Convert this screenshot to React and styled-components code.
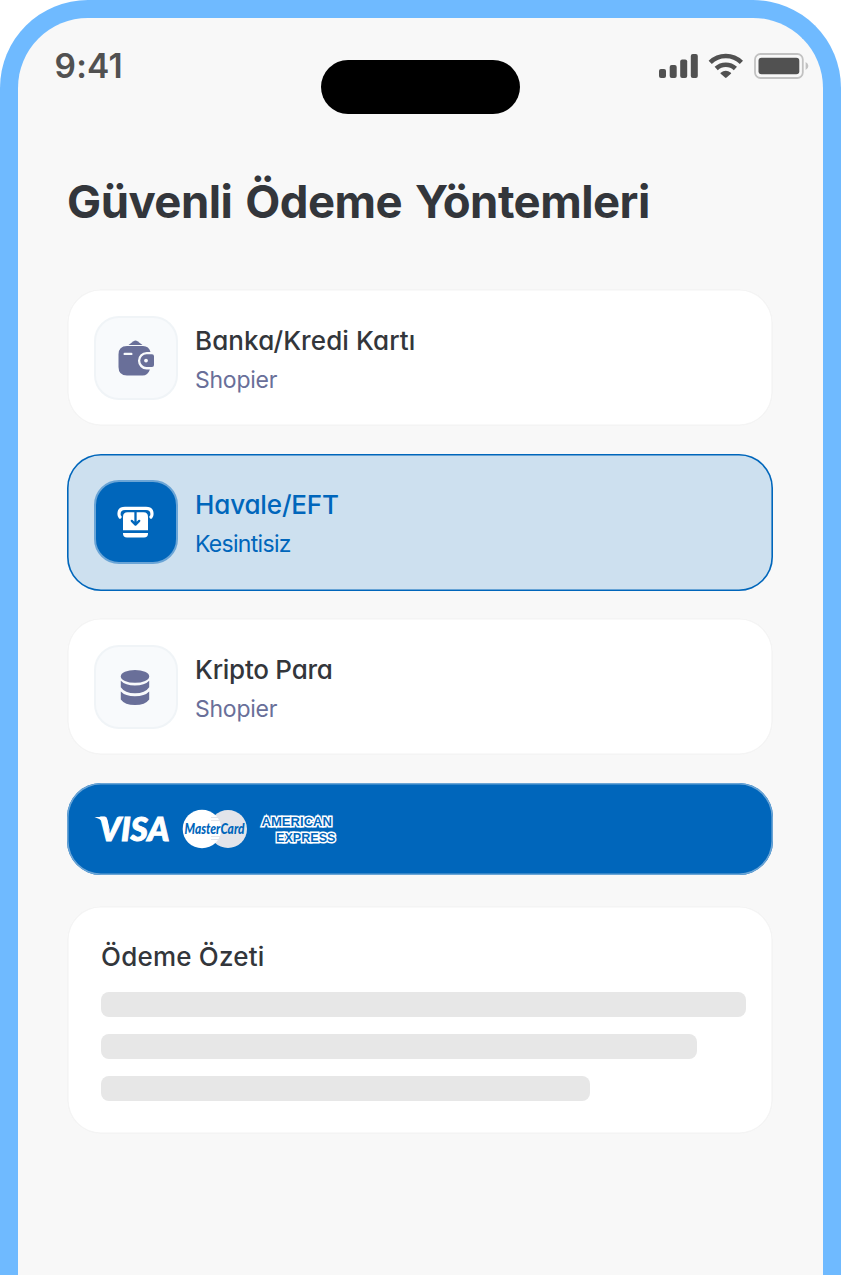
import React from 'react';
import styled, { createGlobalStyle } from 'styled-components';

const GlobalStyle = createGlobalStyle`
  * {
    box-sizing: border-box;
  }

  body {
    margin: 0;
    background: #ffffff;
    overflow: hidden;
    font-family: Inter, 'Liberation Sans', sans-serif;
    font-feature-settings: 'cv11', 'ss03';
  }
`;

const Phone = styled.main`
  width: 841px;
  height: 1275px;
  border: 18px solid #6fbaff;
  border-bottom: 0;
  border-radius: 88px 88px 0 0;
  background-color: #f8f8f8;
`;

const StatusBar = styled.header`
  display: grid;
  grid-template-columns: 1fr 199px 1fr;
  align-items: start;
  height: 96px;
`;

const Time = styled.time`
  padding: 28px 0 0 36.5px;
  font-size: 33.5px;
  line-height: 40px;
  font-weight: 600;
  letter-spacing: 0.2px;
  color: #515151;
`;

const Island = styled.div`
  height: 54px;
  margin-top: 42px;
  border-radius: 27px;
  background-color: #000000;
`;

const StatusIcons = styled.div`
  display: flex;
  justify-content: flex-end;
  padding: 34px 13px 0 0;
`;

const Content = styled.section`
  display: flex;
  flex-direction: column;
  padding: 0 50px 0 49px;
`;

const Title = styled.h1`
  margin: 58px 0 0;
  height: 60px;
  font-size: 45.5px;
  line-height: 60px;
  font-weight: 700;
  letter-spacing: -0.52px;
  word-spacing: 2.6px;
  white-space: nowrap;
  color: #33363b;
`;

const Methods = styled.div`
  display: flex;
  flex-direction: column;
  gap: 27.5px;
  margin-top: 57px;
`;

const Method = styled.article`
  display: flex;
  align-items: center;
  gap: 17px;
  height: 137px;
  padding: 0 27px;
  border-radius: 34px;
  background-color: ${({ $active }) => ($active ? '#cde0ef' : '#ffffff')};
  box-shadow: inset 0 0 0 1.6px ${({ $active }) => ($active ? '#0066bb' : '#f4f4f4')};
`;

const IconTile = styled.div`
  display: flex;
  align-items: center;
  justify-content: center;
  flex: none;
  width: 84px;
  height: 84px;
  border: 2px solid ${({ $active }) => ($active ? '#6ba5d6' : '#f0f4f7')};
  border-radius: 25px;
  background-color: ${({ $active }) => ($active ? '#0066bb' : '#f8fafc')};
  color: ${({ $active }) => ($active ? '#ffffff' : '#696f99')};
`;

const MethodText = styled.div`
  display: flex;
  flex-direction: column;
  gap: 5px;
  padding-top: 5px;
  white-space: nowrap;
`;

const MethodName = styled.h2`
  margin: 0;
  font-size: 26px;
  line-height: 34px;
  font-weight: 500;
  letter-spacing: ${({ $spacing }) => $spacing}px;
  color: ${({ $active }) => ($active ? '#0066bb' : '#33363b')};
`;

const Provider = styled.p`
  margin: 0;
  font-size: 23px;
  line-height: 34px;
  letter-spacing: ${({ $spacing }) => $spacing}px;
  color: ${({ $active }) => ($active ? '#0066bb' : '#696f99')};
`;

const CardBrands = styled.div`
  display: flex;
  align-items: center;
  height: 92px;
  margin-top: 28px;
  padding-left: 26px;
  border-radius: 34px;
  background-color: #0066bb;
  box-shadow: inset 0 0 0 1.6px #6ba5d6;
`;

const Summary = styled.section`
  display: flex;
  flex-direction: column;
  gap: 17px;
  height: 228px;
  margin-top: 31px;
  padding: 33px 26px 0 34px;
  border-radius: 34px;
  background-color: #ffffff;
  box-shadow: inset 0 0 0 1.6px #f4f4f4;
`;

const SummaryTitle = styled.h2`
  margin: 0;
  font-size: 26px;
  line-height: 36px;
  font-weight: 500;
  letter-spacing: 0.2px;
  color: #33363b;
`;

const Line = styled.div`
  flex: none;
  width: ${({ $width }) => $width}px;
  height: 25px;
  border-radius: 8px;
  background-color: #e7e7e7;
`;

const SignalIcons = () => (
  <svg width="152" height="28" viewBox="658 52 152 28" fill="#515151">
    <rect x="659" y="69" width="7" height="9" rx="2" />
    <rect x="669.7" y="65" width="7" height="13" rx="2" />
    <rect x="680.2" y="59.5" width="7" height="18.5" rx="2" />
    <rect x="690.8" y="54" width="7" height="24" rx="2" />
    <g fill="none" stroke="#515151" strokeWidth="4.6">
      <path d="M710.2 62.4a22.4 22.4 0 0 1 31.2 0" />
      <path d="M716.2 68.5a14 14 0 0 1 19.2 0" />
    </g>
    <path d="M720.7 72.7q5.1-4 10.2 0 .6.5 0 1.1l-4.3 3.8q-.8.7-1.6 0l-4.3-3.8q-.6-.6 0-1.1Z" />
    <rect x="755" y="54" width="47.8" height="24" rx="5.5" fill="none" stroke="#c2c2c2" strokeWidth="1.8" />
    <rect x="758.5" y="57.7" width="40.8" height="16.6" rx="3" />
    <path d="M805.6 62q2.800 1.400 2.800 4t-2.800 4Z" fill="#c2c2c2" />
  </svg>
);

const WalletIcon = () => (
  <svg width="38" height="38" viewBox="0 0 38 38" fill="currentColor">
    <path d="M11.5 6 16.500 2.200q2-1.400 4 0L25.500 6Z" />
    <path d="M10 7h16q6 0 7.5 6h-3.8a8.2 8.2 0 0 0 0 17.5h3.2q-2 6-7.4 6H10q-8.500 0-8.500-8.500V15.500Q1.500 7 10 7Z" />
    <path d="M29.500 15.300h5.500q2 0 2 2v8.600q0 2-2 2h-5.500a6.300 6.300 0 0 1 0-12.600Z" />
    <rect x="6.500" y="13.700" width="9" height="2.400" rx="1.200" fill="#f8fafc" />
    <circle cx="29" cy="21.600" r="1.900" fill="#f8fafc" />
  </svg>
);

const TransferIcon = () => (
  <svg width="38" height="38" viewBox="0 0 38 38" fill="currentColor">
    <path
      d="M3 14q-1-1-1-3 0-5.600 6-5.600h21q6 0 6 5.600 0 2-1 3"
      fill="none"
      stroke="currentColor"
      strokeWidth="3.200"
      strokeLinecap="round"
    />
    <path d="M10.500 9.200h16q4.500 0 4.500 4.500v13.500H6V13.700Q6 9.200 10.500 9.200Z" />
    <path d="M6 30h25v.5q0 4-4 4H10q-4 0-4-4Z" />
    <path
      d="M18.500 9v12.500m-3.700-3.600 3.700 3.700 3.700-3.700"
      fill="none"
      stroke="#0066bb"
      strokeWidth="2.300"
      strokeLinecap="round"
      strokeLinejoin="round"
    />
  </svg>
);

const CoinsIcon = () => (
  <svg width="38" height="38" viewBox="0 0 38 38" fill="currentColor">
    <ellipse cx="18" cy="8.400" rx="14.200" ry="6.400" />
    <path d="M3.800 12.700q4.500 4.800 14.200 4.800T32.200 12.700v6.500q-4 6-14.200 6t-14.200-6Z" />
    <path d="M3.800 23.500q4.500 4.800 14.200 4.800t14.200-4.800v8q-4 5.500-14.200 5.500t-14.200-5.500Z" />
  </svg>
);

const BrandLogos = () => (
  <svg width="246" height="44" viewBox="93 807 246 44" fontFamily="Lato, sans-serif">
    <g fill="#ffffff">
      <path d="M94.500 817h9q3 0 4 3l2.500 12q-4-11.500-15.500-15Z" />
      <text
        x="99"
        y="840.700"
        fontSize="32.500"
        fontWeight="900"
        fontStyle="italic"
        stroke="#ffffff"
        strokeWidth="1"
        textLength="70.500"
        lengthAdjust="spacingAndGlyphs"
      >
        VISA
      </text>
    </g>
    <circle cx="228" cy="829" r="19" fill="#e2e4ea" />
    <circle cx="202" cy="829" r="19.300" fill="#ffffff" />
    <g stroke="#e2e4ea" strokeWidth="1">
      <path d="M211 817.500h7M211 820.500h9M211 836.500h10M211 839.500h8" />
    </g>
    <text
      x="184.500"
      y="834"
      fontSize="14.500"
      fontWeight="900"
      fontStyle="italic"
      fill="#0066bb"
      textLength="60"
      lengthAdjust="spacingAndGlyphs"
    >
      MasterCard
    </text>
    <g
      fontFamily="'Liberation Sans', sans-serif"
      fontSize="13.500"
      fontWeight="700"
      fill="#0066bb"
      stroke="#ffffff"
      strokeWidth="3"
      paintOrder="stroke"
    >
      <text x="261.500" y="826" textLength="70.500" lengthAdjust="spacingAndGlyphs">
        AMERICAN
      </text>
      <text x="276" y="841.800" textLength="59.500" lengthAdjust="spacingAndGlyphs">
        EXPRESS
      </text>
    </g>
  </svg>
);

const methods = [
  { name: 'Banka/Kredi Kartı', provider: 'Shopier', icon: WalletIcon, nameSpacing: 0.1, providerSpacing: -0.25 },
  { name: 'Havale/EFT', provider: 'Kesintisiz', icon: TransferIcon, active: true, nameSpacing: -0.15, providerSpacing: -0.7 },
  { name: 'Kripto Para', provider: 'Shopier', icon: CoinsIcon, nameSpacing: -0.25, providerSpacing: -0.25 },
];

const lines = [645, 596, 489];

const App = () => {
  return (
    <>
      <GlobalStyle />
      <Phone>
        <StatusBar>
          <Time>9:41</Time>
          <Island />
          <StatusIcons>
            <SignalIcons />
          </StatusIcons>
        </StatusBar>
        <Content>
          <Title>Güvenli Ödeme Yöntemleri</Title>
          <Methods>
            {methods.map(({ name, provider, icon: Icon, active, nameSpacing, providerSpacing }) => (
              <Method key={name} $active={active}>
                <IconTile $active={active}>
                  <Icon />
                </IconTile>
                <MethodText>
                  <MethodName $active={active} $spacing={nameSpacing}>{name}</MethodName>
                  <Provider $active={active} $spacing={providerSpacing}>{provider}</Provider>
                </MethodText>
              </Method>
            ))}
          </Methods>
          <CardBrands>
            <BrandLogos />
          </CardBrands>
          <Summary>
            <SummaryTitle>Ödeme Özeti</SummaryTitle>
            {lines.map((width) => (
              <Line key={width} $width={width} />
            ))}
          </Summary>
        </Content>
      </Phone>
    </>
  );
};

export default App;
